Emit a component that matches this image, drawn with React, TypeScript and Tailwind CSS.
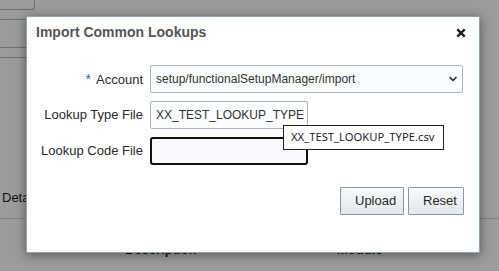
import { ChevronDown } from "lucide-react";

// background page that sits behind the modal
const BackgroundPage = () => (
  <div className="flex flex-col">
    <div className="h-[10px] w-[35px] rounded-br-[3px] border-b border-r border-[#6e6e6e]" />
    <div className="mt-[9px] h-px w-[80px] bg-[#6e6e6e]" />
    <div className="mt-[27px] h-px w-[80px] bg-[#6e6e6e]" />
    <div className="mt-[9px] h-px w-[80px] bg-[#6e6e6e]" />
    <p className="mt-[132px] pl-[2px] text-[13px] leading-[16px] text-[#111]">Details</p>
    <div className="mt-[12px] h-px bg-[#828282]" />
    <div className="mt-[23px] flex pl-[125px] text-[13px] font-bold leading-[16px] text-[#111]">
      <span className="w-[212px]">Description</span>
      <span>Module</span>
    </div>
  </div>
);

const FormRow = ({ label, required, children }: { label: string; required?: boolean; children: React.ReactNode }) => (
  <div className="flex h-[28px] items-center">
    <label className="w-[116px] text-right text-[13px] leading-[16px] text-[#2a2a2a]">
      {required && <span className="mr-[5px] text-[14px] text-[#1f6fb8]">*</span>}
      {label}
    </label>
    <div className="ml-[7px] h-full">{children}</div>
  </div>
);

const ImportDialog = () => (
  <div className="absolute left-[26px] top-[16px] flex h-[237px] w-[454px] flex-col border border-[#8ea3b6] bg-white shadow-[0_2px_10px_rgba(0,0,0,0.45)]">
    <div className="flex h-[48px] items-start justify-between pl-[9px] pr-[13px] pt-[5px]">
      <h1 className="text-[14px] font-bold leading-[20px] text-[#555]">Import Common Lookups</h1>
      <button className="mt-[6px] text-[#222]">
        <svg width="10" height="10" viewBox="0 0 10 10">
          <path d="M1.3 1.3 L8.7 8.7 M8.7 1.3 L1.3 8.7" stroke="currentColor" strokeWidth="2.4" />
        </svg>
      </button>
    </div>

    <div className="flex flex-col gap-[8px]">
      <FormRow label="Account" required>
        <div className="flex h-full w-[313px] items-center justify-between rounded-[2px] border border-[#a2b4c5] bg-[#fbfcfd] pl-[5px] pr-[3px] text-[12px] text-[#333]">
          <span>setup/functionalSetupManager/import</span>
          <ChevronDown size={12} strokeWidth={3.5} className="text-[#333]" />
        </div>
      </FormRow>
      <FormRow label="Lookup Type File">
        <div className="flex h-full w-[158px] items-center overflow-hidden rounded-[2px] border border-[#a2b4c5] bg-[#fbfcfd] pl-[5px] text-[12px] text-[#333]">
          XX_TEST_LOOKUP_TYPE
        </div>
      </FormRow>
      <FormRow label="Lookup Code File">
        <div className="h-full w-[158px] rounded-[3px] border-2 border-[#111] bg-[#f7f9fc]" />
      </FormRow>
    </div>

    <div className="mt-[22px] flex justify-end gap-[4px] pr-[15px]">
      <button className="h-[28px] w-[64px] rounded-[1px] border border-[#7f98ae] bg-gradient-to-b from-[#f7f9fa] to-[#e3e8ed] pl-[14px] pr-[8px] text-left text-[13px] text-[#2a2a2a]">
        Upload
      </button>
      <button className="h-[28px] w-[56px] rounded-[1px] border border-[#7f98ae] bg-gradient-to-b from-[#f7f9fa] to-[#e3e8ed] pl-[14px] pr-[8px] text-left text-[13px] text-[#2a2a2a]">
        Reset
      </button>
    </div>

    {/* hover tooltip over the type file input */}
    <div className="absolute left-[256px] top-[108px] flex h-[25px] w-[161px] items-center border border-[#222] bg-white pl-[7px] font-['Noto_Sans',sans-serif] text-[11.25px] text-[#1e1e2e]">
      XX_TEST_LOOKUP_TYPE.csv
    </div>
  </div>
);

export default function App() {
  return (
    <div className="relative h-[271px] w-[499px] overflow-hidden bg-[#9b9b9b] font-['Liberation_Sans',Arial,sans-serif]">
      <BackgroundPage />
      <ImportDialog />
    </div>
  );
}
